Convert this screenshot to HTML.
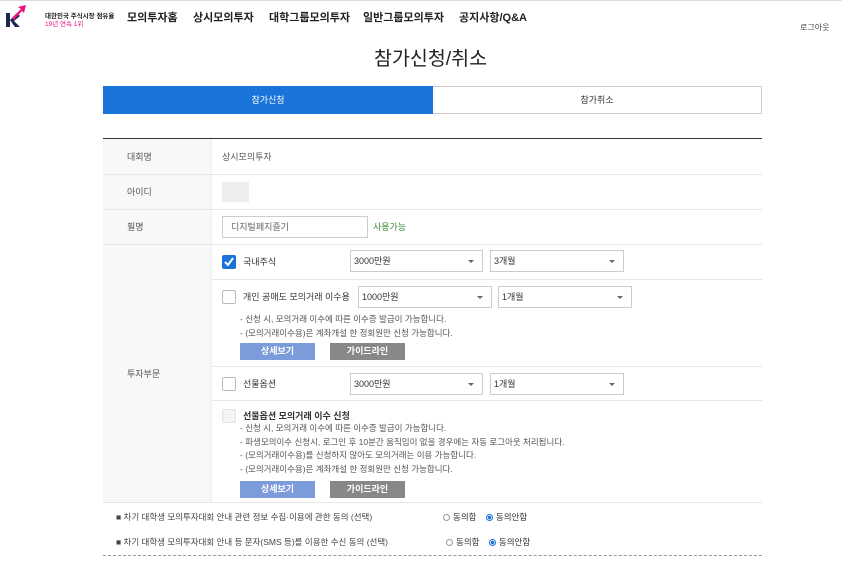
<!DOCTYPE html>
<html><head><meta charset="utf-8"><style>
*{margin:0;padding:0;box-sizing:border-box}
body{width:842px;height:569px;overflow:hidden;background:#fff;font-family:"Liberation Sans","Noto Sans CJK KR",sans-serif;color:#333;position:relative;font-size:9px}
.a{position:absolute;white-space:nowrap}
.nav{font-size:11px;font-weight:bold;color:#222;top:9px}
.sel{position:absolute;height:22px;border:1px solid #ccc;background:#fff;font-size:9px;padding:0 3px;line-height:20px;color:#333}
.sel:after{content:"";position:absolute;right:8px;top:9px;border:3px solid transparent;border-top:3px solid #666}
.cb{position:absolute;width:14px;height:14px;border:1px solid #bbb;background:#fff;border-radius:2px}
.btn{position:absolute;width:75px;height:17px;color:#fff;font-size:9px;text-align:center;line-height:17px;font-weight:bold}
.hl{position:absolute;height:1px;background:#e6e6e6}
.note{font-size:8.5px;color:#555;line-height:13.5px}
.rad{display:inline-block;width:7px;height:7px;border:1px solid #999;border-radius:50%;vertical-align:-1px;margin-right:3px}
.rad.on{border-color:#1a73d9;background:radial-gradient(#1a73d9 45%,#fff 55%)}
</style></head><body>
<div class="a" style="left:0;top:0;width:842px;height:1px;background:#ddd"></div>
<svg class="a" style="left:5px;top:4px" width="22" height="24" viewBox="0 0 22 24">
<rect x="1" y="9" width="4" height="14" fill="#1d2550"/>
<polygon points="5,16 12,9 15,12 9,17 15,23 10,23" fill="#1d2550"/>
<polygon points="7,14 16,5 13,3 21,1 19,9 17,7 9,16" fill="#e8127c"/>
</svg>
<div class="a" style="left:45px;top:10px;font-size:6.5px;font-weight:bold;color:#222">대한민국 주식시장 점유율</div>
<div class="a" style="left:45px;top:18px;font-size:6.5px;color:#e8127c">19년 연속 1위</div>
<div class="a nav" style="left:127px">모의투자홈</div>
<div class="a nav" style="left:193px">상시모의투자</div>
<div class="a nav" style="left:269px">대학그룹모의투자</div>
<div class="a nav" style="left:363px">일반그룹모의투자</div>
<div class="a nav" style="left:459px">공지사항/Q&amp;A</div>
<div class="a" style="left:800px;top:22px;font-size:8px;color:#444">로그아웃</div>
<div class="a" style="left:374px;top:42px;font-size:19.5px;color:#222">참가신청/취소</div>
<div class="a" style="left:103px;top:86px;width:330px;height:28px;background:#1a73d9;color:#fff;text-align:center;line-height:28px;font-size:9px">참가신청</div>
<div class="a" style="left:433px;top:86px;width:329px;height:28px;border:1px solid #ccc;border-left:none;text-align:center;line-height:27px;font-size:9px;color:#333">참가취소</div>

<div class="a" style="left:103px;top:138px;width:659px;height:1px;background:#333"></div>
<div class="a" style="left:103px;top:139px;width:109px;height:363px;background:#f7f8fa;border-right:1px solid #eee"></div>
<div class="hl" style="left:103px;top:174px;width:659px"></div>
<div class="hl" style="left:103px;top:209px;width:659px"></div>
<div class="hl" style="left:103px;top:244px;width:659px"></div>
<div class="hl" style="left:212px;top:279px;width:550px"></div>
<div class="hl" style="left:212px;top:366px;width:550px"></div>
<div class="hl" style="left:212px;top:400px;width:550px"></div>
<div class="hl" style="left:103px;top:502px;width:659px"></div>

<div class="a" style="left:127px;top:150px;color:#555">대회명</div>
<div class="a" style="left:222px;top:150px;color:#555">상시모의투자</div>
<div class="a" style="left:127px;top:185px;color:#555">아이디</div>
<div class="a" style="left:222px;top:182px;width:27px;height:20px;background:#eee"></div>
<div class="a" style="left:127px;top:220px;color:#555">필명</div>
<div class="a" style="left:222px;top:216px;width:146px;height:22px;border:1px solid #ccc;padding:0 8px;line-height:20px;color:#666">디지털페지즐기</div>
<div class="a" style="left:373px;top:220px;color:#3a8a3a">사용가능</div>
<div class="a" style="left:127px;top:367px;color:#555">투자부문</div>

<div class="cb" style="left:222px;top:255px;background:#1a73d9;border-color:#1a73d9"><svg width="12" height="12" viewBox="0 0 12 12" style="position:absolute;left:0;top:0"><path d="M2 6 L5 9 L10 2" stroke="#fff" stroke-width="2" fill="none"/></svg></div>
<div class="a" style="left:243px;top:255px">국내주식</div>
<div class="sel" style="left:350px;top:250px;width:133px">3000만원</div>
<div class="sel" style="left:490px;top:250px;width:134px">3개월</div>

<div class="cb" style="left:222px;top:290px"></div>
<div class="a" style="left:243px;top:290px">개인 공매도 모의거래 이수용</div>
<div class="sel" style="left:358px;top:286px;width:134px">1000만원</div>
<div class="sel" style="left:498px;top:286px;width:134px">1개월</div>
<div class="a note" style="left:240px;top:313px">- 신청 시, 모의거래 이수에 따른 이수증 발급이 가능합니다.<br>- (모의거래이수용)은 계좌개설 한 정회원만 신청 가능합니다.</div>
<div class="btn" style="left:240px;top:343px;background:#7b9bdb">상세보기</div>
<div class="btn" style="left:330px;top:343px;background:#888">가이드라인</div>

<div class="cb" style="left:222px;top:377px"></div>
<div class="a" style="left:243px;top:377px">선물옵션</div>
<div class="sel" style="left:350px;top:373px;width:133px">3000만원</div>
<div class="sel" style="left:490px;top:373px;width:134px">1개월</div>

<div class="cb" style="left:222px;top:409px;background:#f4f4f4;border-color:#e2e2e2"></div>
<div class="a" style="left:243px;top:409px;font-weight:bold;color:#333">선물옵션 모의거래 이수 신청</div>
<div class="a note" style="left:240px;top:422px">- 신청 시, 모의거래 이수에 따른 이수증 발급이 가능합니다.<br>- 파생모의이수 신청시, 로그인 후 10분간 움직임이 없을 경우에는 자동 로그아웃 처리됩니다.<br>- (모의거래이수용)를 신청하지 않아도 모의거래는 이용 가능합니다.<br>- (모의거래이수용)은 계좌개설 한 정회원만 신청 가능합니다.</div>
<div class="btn" style="left:240px;top:481px;background:#7b9bdb">상세보기</div>
<div class="btn" style="left:330px;top:481px;background:#888">가이드라인</div>

<div class="a" style="left:116px;top:511px;font-size:8.5px;color:#444">■ 차기 대학생 모의투자대회 안내 관련 정보 수집·이용에 관한 동의 (선택)</div>
<div class="a" style="left:443px;top:511px;font-size:8.5px"><span class="rad"></span>동의함 &nbsp; &nbsp;<span class="rad on"></span>동의안함</div>
<div class="a" style="left:116px;top:536px;font-size:8.5px;color:#444">■ 차기 대학생 모의투자대회 안내 등 문자(SMS 등)를 이용한 수신 동의 (선택)</div>
<div class="a" style="left:446px;top:536px;font-size:8.5px"><span class="rad"></span>동의함 &nbsp; &nbsp;<span class="rad on"></span>동의안함</div>
<div class="a" style="left:103px;top:555px;width:659px;border-top:1px dashed #999"></div>
</body></html>
